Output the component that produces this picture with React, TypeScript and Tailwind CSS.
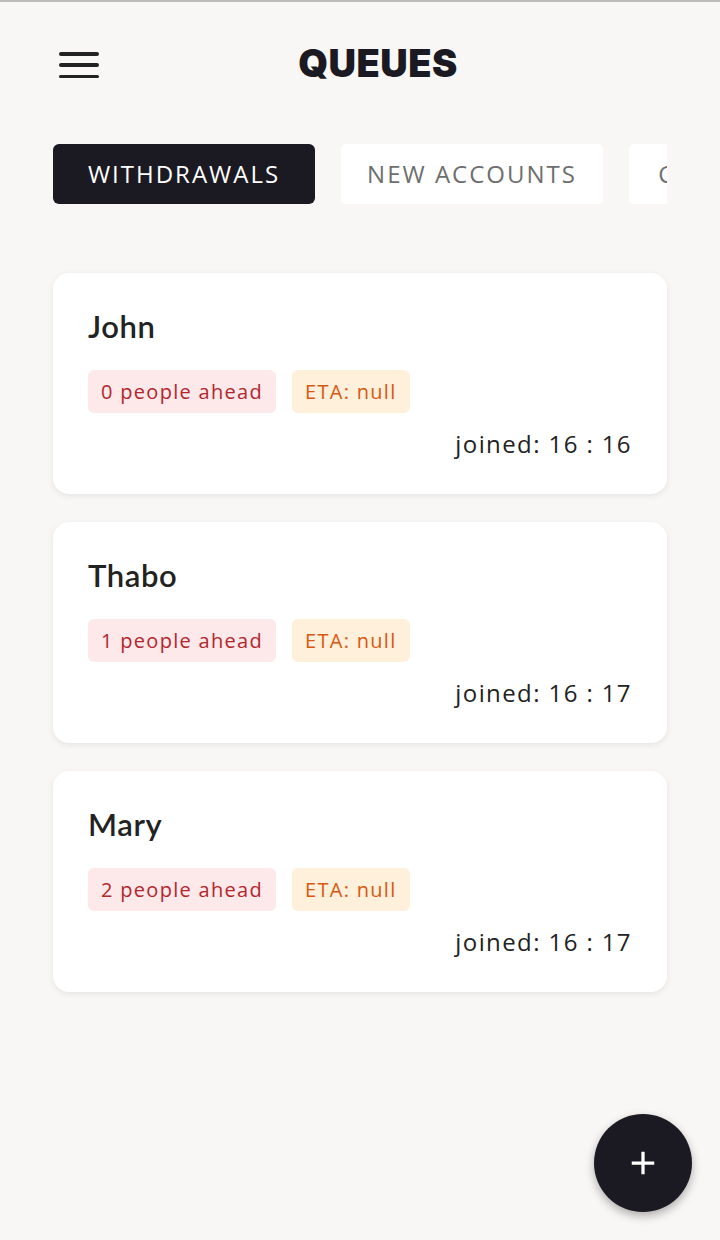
import React from "react";

type Entry = { name: string; ahead: number; joined: string };

const entries: Entry[] = [
  { name: "John", ahead: 0, joined: "16 : 16" },
  { name: "Thabo", ahead: 1, joined: "16 : 17" },
  { name: "Mary", ahead: 2, joined: "16 : 17" },
];

const tabs = ["WITHDRAWALS", "NEW ACCOUNTS", "CASH DEPOSITS"];

function QueueCard({ entry }: { entry: Entry }) {
  return (
    <div className="flex h-[221px] flex-col rounded-2xl bg-white px-[35px] pt-[34px] shadow-[0_2px_6px_rgba(0,0,0,0.08)]">
      <h3 className="font-['Lato',sans-serif] text-[31px] font-semibold leading-[38px] tracking-[0.6px] text-[#222222]">
        {entry.name}
      </h3>
      <div className="mt-[25px] flex gap-4 font-['Open_Sans',sans-serif] text-[20px] font-medium tracking-[1.3px]">
        <span className="flex h-[43px] items-center rounded-md bg-[#fde8ea] px-[13px] text-[#b3262c]">
          {entry.ahead} people ahead
        </span>
        <span className="flex h-[43px] items-center rounded-md bg-[#fff0dc] px-[13px] text-[#d9580f]">
          ETA: null
        </span>
      </div>
      <p className="mt-[12px] text-right font-['Open_Sans',sans-serif] text-[24px] font-medium leading-[38px] tracking-[1.4px] text-[#222222]">
        joined: {entry.joined}
      </p>
    </div>
  );
}

export default function App() {
  return (
    <div className="relative min-h-[1240px] border-t-2 border-[#bdbcba] bg-[#f8f7f5]">
      <header className="flex h-[126px] items-start px-[59px] pt-[50px]">
        <button
          type="button"
          aria-label="Menu"
          className="flex h-[26px] w-10 flex-col justify-between"
        >
          <span className="h-[3.5px] w-10 rounded-sm bg-[#222222]" />
          <span className="h-[3.5px] w-10 rounded-sm bg-[#222222]" />
          <span className="h-[3.5px] w-10 rounded-sm bg-[#222222]" />
        </button>
        <h1 className="mt-[-17px] flex-1 text-center font-['Inter',sans-serif] text-[38px] font-black tracking-[0.5px] text-[#1b1a22]">
          QUEUES
        </h1>
        <div className="w-[4px]" />
      </header>

      <div className="mx-[53px] mt-4 flex gap-[26px] overflow-hidden">
        {tabs.map((t, i) => (
          <button
            key={t}
            type="button"
            className={
              i === 0
                ? "flex h-[60px] w-[262px] shrink-0 items-center justify-center rounded-md bg-[#1b1a22] font-['Open_Sans',sans-serif] text-[24px] font-medium tracking-[2px] text-white"
                : "flex h-[60px] w-[262px] shrink-0 items-center justify-center rounded-md bg-white font-['Open_Sans',sans-serif] text-[24px] font-medium tracking-[2px] text-[#6e6e6e]"
            }
          >
            {t}
          </button>
        ))}
      </div>

      <div className="mx-[53px] mt-[69px] flex flex-col gap-[28px]">
        {entries.map((e) => (
          <QueueCard key={e.name} entry={e} />
        ))}
      </div>

      <button
        type="button"
        aria-label="Add"
        className="absolute left-[594px] top-[1112px] flex h-[98px] w-[98px] items-center justify-center rounded-full bg-[#1b1a22] shadow-[0_4px_10px_rgba(0,0,0,0.3)]"
      >
        <svg viewBox="0 0 24 24" className="h-[30px] w-[30px]" fill="none" stroke="white" strokeWidth={2.6}>
          <path d="M12 3v18M3 12h18" />
        </svg>
      </button>
    </div>
  );
}
